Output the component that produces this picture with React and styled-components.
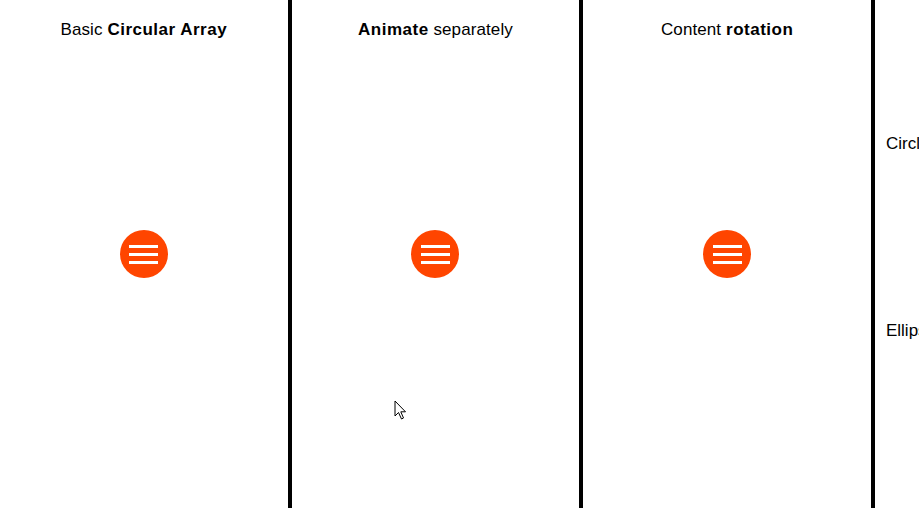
import React from "react";
import styled, { createGlobalStyle } from "styled-components";

const GlobalStyle = createGlobalStyle`
  html, body {
    margin: 0;
    padding: 0;
    background: #fff;
    overflow: hidden;
  }
  body {
    font-family: "Liberation Sans", Arial, sans-serif;
    color: #000;
  }
`

const Page = styled.div`
  display: flex;
  width: 919px;
  height: 508px;
  overflow: hidden;
  position: relative;
`

const Panel = styled.section`
  flex: 0 0 287.67px;
  height: 508px;
  border-right: 4px solid #000;
  display: flex;
  flex-direction: column;
  align-items: center;
`

const Title = styled.h2`
  margin: 0;
  padding-top: 20px;
  height: 20px;
  font-size: 17px;
  font-weight: normal;
  line-height: 20px;
  letter-spacing: 0.1px;
  white-space: nowrap;

  & b {
    font-weight: bold;
    letter-spacing: 0.5px;
  }
`

const Stage = styled.div`
  flex: 1;
  display: flex;
  align-items: center;
  justify-content: center;
  padding-bottom: 40px;
`

const MenuButton = styled.button`
  width: 48px;
  height: 48px;
  border-radius: 50%;
  border: none;
  background: #ff4500;
  padding: 0;
  display: flex;
  flex-direction: column;
  align-items: center;
  justify-content: center;
  gap: 5px;
  cursor: pointer;
`

const Bar = styled.span`
  display: block;
  width: 29px;
  height: 3px;
  background: #fff;
`

const SidePanel = styled.section`
  flex: 1;
  display: flex;
  flex-direction: column;
  padding: 134px 0 0 11px;
  gap: 167px;
`

const Option = styled.div`
  font-size: 17px;
  line-height: 20px;
  white-space: nowrap;
`

const Cursor = styled.svg`
  position: absolute;
  left: 394px;
  top: 400px;
  width: 14px;
  height: 21px;
`

function Burger() {
    return (
        <MenuButton aria-label="menu">
            <Bar/>
            <Bar/>
            <Bar/>
        </MenuButton>
    )
}

export default function App() {
    return (
        <>
            <GlobalStyle/>
            <Page>
                <Panel>
                    <Title>Basic <b>Circular Array</b></Title>
                    <Stage><Burger/></Stage>
                </Panel>
                <Panel>
                    <Title><b>Animate</b> separately</Title>
                    <Stage><Burger/></Stage>
                </Panel>
                <Panel>
                    <Title>Content <b>rotation</b></Title>
                    <Stage><Burger/></Stage>
                </Panel>
                <SidePanel>
                    <Option>Circle</Option>
                    <Option>Ellipse</Option>
                </SidePanel>
                <Cursor viewBox="0 0 14 21">
                    <path d="M1 1 L1 16 L4.5 12.5 L7.5 19 L9.5 18 L6.8 11.8 L11.5 11.8 Z"
                          fill="#fff" stroke="#000" strokeWidth="1" strokeLinejoin="round"/>
                </Cursor>
            </Page>
        </>
    )
}
